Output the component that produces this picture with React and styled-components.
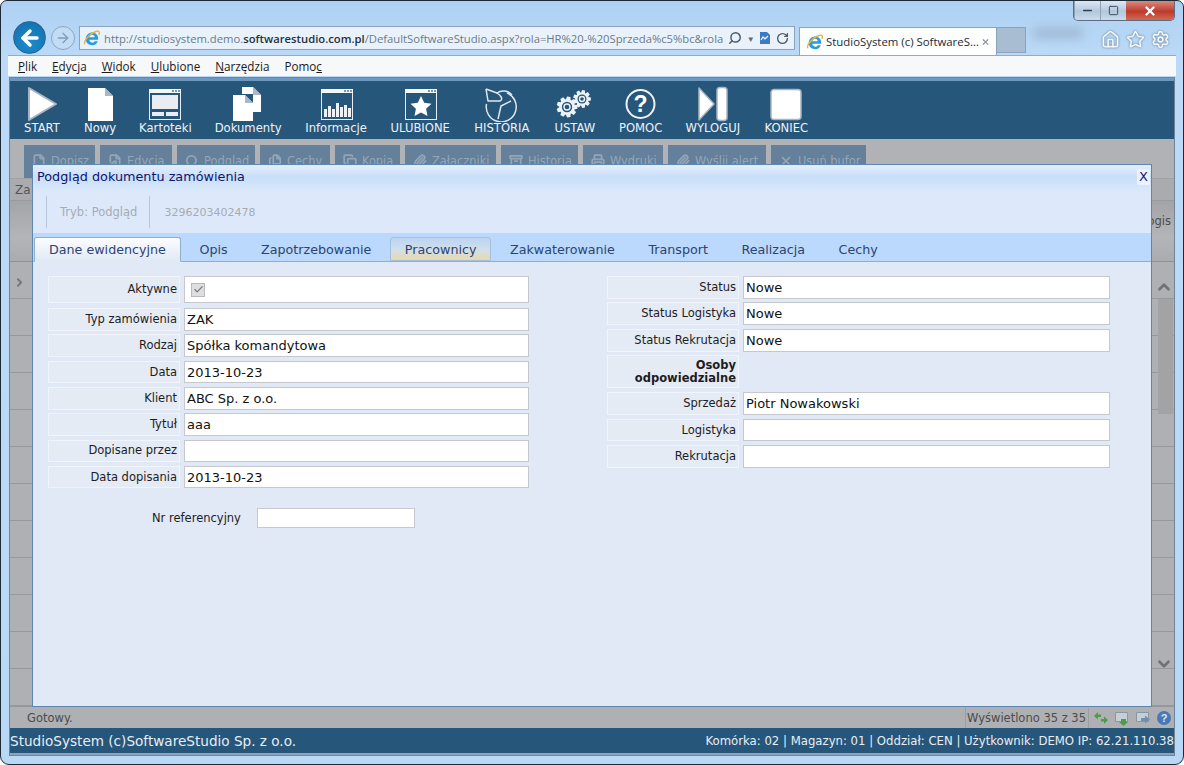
import React from "react";
import styled, { createGlobalStyle } from "styled-components";
import {
  ArrowLeft,
  ArrowRight,
  Check,
  ChevronDown,
  ChevronRight,
  ChevronUp,
  Copy,
  File,
  FilePen,
  Files,
  House,
  Minus,
  Paperclip,
  Printer,
  RotateCw,
  Search,
  Settings,
  Square,
  Star,
  Archive,
  X,
} from "lucide-react";

const GlobalStyle = createGlobalStyle`
  html, body { margin: 0; padding: 0; overflow: hidden; }
  body { font-family: "DejaVu Sans", Verdana, sans-serif; }
  * { box-sizing: border-box; }
`;

const Window = styled.div`
  width: 1184px;
  height: 765px;
  display: flex;
  flex-direction: column;
  border: 1px solid #1c2a36;
  border-radius: 7px 7px 9px 9px;
  overflow: hidden;
  padding: 0 7px 9px 7px;
  background: linear-gradient(#aed1f2 0, #bcdaf8 60px, #b9d8f6 100%);
`;
const TitleRow = styled.div`
  height: 19px;
  display: flex;
  justify-content: flex-end;
`;
const WinButtons = styled.div`
  width: 102px;
  height: 20px;
  margin-right: 1px;
  display: flex;
  border: 1px solid #5d6d7d;
  border-top: 0;
  border-radius: 0 0 5px 5px;
  overflow: hidden;
`;
const WinButton = styled.div`
  flex: ${(p) => (p.$close ? "0 0 48px" : "1")};
  display: flex;
  align-items: center;
  justify-content: center;
  color: ${(p) => (p.$close ? "#fff" : "#33404e")};
  border-left: ${(p) => (p.$close ? "0" : "1px solid #8fa2b5")};
  background: ${(p) =>
    p.$close
      ? "linear-gradient(#d98a7e, #bd3b2c 55%, #cf6a55)"
      : "linear-gradient(#dbe7f3, #b3c8dd 55%, #c9dbec)"};
`;
const NavRow = styled.div`
  height: 35px;
  display: flex;
  align-items: flex-end;
  padding-left: 5px;
`;
const BackButton = styled.div`
  width: 33px;
  height: 33px;
  margin-bottom: 1px;
  border-radius: 50%;
  background: radial-gradient(circle at 50% 70%, #1c8ccc, #0f6ead);
  border: 1px solid #2a5f88;
  color: #fff;
  display: flex;
  align-items: center;
  justify-content: center;
`;
const ForwardButton = styled.div`
  width: 24px;
  height: 24px;
  margin: 0 4px 5px 5px;
  border-radius: 50%;
  border: 1px solid #8aa6c2;
  background: #c3dcf5;
  color: #7e9cba;
  display: flex;
  align-items: center;
  justify-content: center;
`;
const AddressBar = styled.div`
  width: 716px;
  height: 24px;
  margin-bottom: 5px;
  display: flex;
  align-items: center;
  padding: 0 3px;
  border: 1px solid #8ba3bc;
  background: #e9f2fb;
  font-family: "Open Sans", sans-serif;
  font-size: 11.25px;
`;
const Url = styled.div`
  width: 619px;
  margin-left: 3px;
  overflow: hidden;
  white-space: nowrap;
  color: #6b7a8a;
  b { font-weight: 600; color: #26303a; }
`;
const AddressTools = styled.div`
  flex: 1;
  display: flex;
  align-items: center;
  justify-content: space-between;
  padding: 0 2px 0 5px;
  color: #4d5a68;
  i { font-style: normal; font-size: 8px; color: #5f6c79; }
`;
const Tab = styled.div`
  width: 198px;
  height: 28px;
  margin-left: 4px;
  display: flex;
  align-items: center;
  gap: 2px;
  padding: 0 6px;
  background: #fdfefe;
  border: 1px solid #8ba3bc;
  border-bottom: 0;
  font-family: "Open Sans", sans-serif;
  font-size: 11.4px;
  color: #1f2a36;
  white-space: nowrap;
  span { flex: 1; }
`;
const GhostTab = styled.div`
  width: 29px;
  height: 26px;
  margin-bottom: 2px;
  background: #a9bdd2;
  border: 1px solid #8ba3bc;
  border-left: 0;
`;
const BlurHint = styled.div`
  width: 52px;
  height: 12px;
  margin: 0 0 16px 6px;
  border-radius: 6px;
  background: #a2bcd6;
  filter: blur(5px);
`;
const BrowserTools = styled.div`
  margin-left: auto;
  margin-right: 6px;
  margin-bottom: 6px;
  display: flex;
  gap: 6px;
  color: #f4f8fc;
  svg { filter: drop-shadow(0 0 1px #5c7288); }
`;
const MenuBar = styled.div`
  height: 21px;
  flex: none;
  display: flex;
  align-items: center;
  gap: 15px;
  padding-left: 10px;
  background: #f7f8f9;
  border-top: 1px solid #97abbe;
  font-family: "Open Sans", sans-serif;
  font-size: 11.7px;
  color: #1a1a1a;
  u { text-underline-offset: 1px; }
`;
const Page = styled.div`
  position: relative;
  flex: 1;
  display: flex;
  flex-direction: column;
  margin: 2px 2px 0;
  min-height: 0;
  outline: 1px solid #6f8497;
  border-bottom: 2px solid #92a3b3;
`;
const Toolbar = styled.div`
  height: 61px;
  flex: none;
  display: flex;
  gap: 23px;
  padding: 5px 0 0 13px;
  background: #27567b;
  border-top: 3px solid #6d97bc;
`;
const ToolItem = styled.div`
  display: flex;
  flex-direction: column;
  align-items: center;
  color: #eef3f8;
  font-size: 11.6px;
  line-height: 13px;
  white-space: nowrap;
  svg { display: block; }
`;
const Backdrop = styled.div`
  flex: 1;
  min-height: 0;
  display: flex;
  flex-direction: column;
  padding-top: 6px;
  background: #b0b2b5;
`;
const ActionRow = styled.div`
  height: 33px;
  flex: none;
  display: flex;
  gap: 5px;
  padding-left: 14px;
`;
const ActionButton = styled.div`
  width: ${(p) => p.$w}px;
  display: flex;
  align-items: flex-start;
  gap: 5px;
  padding: 9px 0 0 8px;
  background: #64809b;
  color: #93a7ba;
  font-size: 11.4px;
  line-height: 15px;
  white-space: nowrap;
  overflow: hidden;
  svg { flex: none; color: #93a5b7; }
`;
const HeadRow = styled.div`
  height: 22px;
  flex: none;
  padding: 4px 0 0 5px;
  background: #a9abae;
  border-top: 1px solid #9fa1a4;
  font-size: 12px;
  color: #555;
`;
const ColumnRow = styled.div`
  height: 62px;
  flex: none;
  display: flex;
  justify-content: flex-end;
  align-items: flex-end;
  padding: 0 3px 33px 0;
  overflow: hidden;
  background: linear-gradient(#a2a4a7, #b3b5b8 60%, #a9abae);
  border-top: 1px solid #97999c;
  border-bottom: 1px solid #8f9194;
  font-size: 11.5px;
  color: #4c4c4c;
  white-space: nowrap;
`;
const TableBody = styled.div`
  flex: 1;
  min-height: 0;
  display: flex;
  justify-content: space-between;
  background: repeating-linear-gradient(#aeb0b3 0, #aeb0b3 36px, #97999c 36px, #97999c 37px);
`;
const CollapseStrip = styled.div`
  width: 22px;
  padding: 12px 0 0 3px;
  color: #75787b;
`;
const ScrollColumn = styled.div`
  width: 20px;
  display: flex;
  flex-direction: column;
  align-items: center;
  padding: 16px 0 33px;
  color: #6f7275;
`;
const ScrollTrack = styled.div`
  flex: 1;
  width: 100%;
  padding: 3px 0 0 4px;
`;
const ScrollThumb = styled.div`
  width: 15px;
  height: 115px;
  background: #a3a3a5;
`;
const StatusBar = styled.div`
  height: 22px;
  flex: none;
  display: flex;
  align-items: center;
  justify-content: space-between;
  padding-left: 17px;
  background: #aeb0b3;
  border-top: 1px solid #94979a;
  color: #4c4c4c;
  font-size: 11.5px;
`;
const StatusRight = styled.div`
  height: 100%;
  display: flex;
  align-items: center;
  gap: 5px;
  padding: 0 2px 0 1px;
  border-left: 1px solid #9b9ea1;
  span { border-right: 1px solid #9b9ea1; padding-right: 2px; line-height: 20px; margin-right: -1px; }
`;
const Footer = styled.div`
  height: 25px;
  flex: none;
  display: flex;
  align-items: center;
  justify-content: space-between;
  background: #27567b;
  color: #e8eef4;
  font-size: 11.7px;
  white-space: nowrap;
`;
const FooterLeft = styled.span`
  font-size: 13.6px;
`;
const Modal = styled.div`
  position: absolute;
  left: 22px;
  top: 86px;
  width: 1120px;
  height: 543px;
  display: flex;
  flex-direction: column;
  border: 1px solid #5d87ae;
  background: #e1e9f6;
`;
const ModalTitle = styled.div`
  height: 27px;
  flex: none;
  display: flex;
  align-items: center;
  justify-content: space-between;
  padding: 0 0 4px 4px;
  background: linear-gradient(#e3eefd, #c9def9 45%, #dbe9fc);
  color: #0b1570;
  font-size: 12.8px;
`;
const CloseBox = styled.div`
  width: 13px;
  height: 16px;
  margin-right: 1px;
  display: flex;
  align-items: center;
  justify-content: center;
  background: #eaf2fd;
  color: #13247c;
  font-size: 13px;
`;
const ModeRow = styled.div`
  height: 41px;
  flex: none;
  display: flex;
  padding: 4px 0 5px 13px;
  background: #dde9fb;
  color: #a6abb2;
`;
const ModeCell = styled.div`
  display: flex;
  align-items: center;
  padding: 0 ${(p) => p.$pr}px 0 ${(p) => p.$pl}px;
  border-left: 1px solid #b3c6da;
  font-size: ${(p) => p.$fs}px;
`;
const TabStrip = styled.div`
  height: 29px;
  flex: none;
  display: flex;
  align-items: flex-end;
  gap: 3.5px;
  padding-left: 1px;
  background: #bbd9fc;
  border-bottom: 1px solid #8eaed0;
`;
const FormTab = styled.div`
  height: ${(p) => (p.$active ? 25 : 24)}px;
  margin-bottom: ${(p) => (p.$active ? -1 : 0)}px;
  display: flex;
  align-items: center;
  padding: 0 14px;
  border-radius: 3px 3px 0 0;
  font-size: 12.7px;
  white-space: nowrap;
  color: #2d4371;
  border: 1px solid transparent;
  ${(p) =>
    p.$active &&
    "background: linear-gradient(#fbfdff, #e1e9f6); border-color: #8eaed0; border-bottom-color: #e1e9f6;"}
  ${(p) =>
    p.$hover &&
    "background: linear-gradient(#bcd5f2 0, #d2dfe9 55%, #e8d9a9 100%); border-color: #a5c0dc;"}
`;
const FormBody = styled.div`
  flex: 1;
  display: flex;
  padding: 14px 0 0 15px;
`;
const LeftPane = styled.div`
  width: 559px;
`;
const RightPane = styled.div`
  width: 503px;
`;
const Rows = styled.div`
  display: flex;
  flex-direction: column;
  gap: ${(p) => p.$gap}px;
`;
const Row = styled.div`
  display: flex;
  gap: 4px;
  height: ${(p) => p.$h || 22.6}px;
  margin-bottom: ${(p) => p.$mb || 0}px;
`;
const Label = styled.div`
  width: 132px;
  flex: none;
  display: flex;
  align-items: center;
  justify-content: flex-end;
  text-align: right;
  padding-right: 2px;
  border: 1px solid #f1f5fb;
  background: #e5ebf5;
  color: #1d1d1d;
  font-size: 11.5px;
  line-height: 13px;
  font-weight: ${(p) => (p.$bold ? 700 : 400)};
`;
const Field = styled.input`
  width: ${(p) => p.$w}px;
  flex: none;
  height: 100%;
  padding: 0 2px;
  border: 1px solid #c5c8cc;
  background: #fff;
  color: #111;
  font-family: "DejaVu Sans", Verdana, sans-serif;
  font-size: 13px;
  outline: none;
`;
const CheckCell = styled.div`
  width: 345px;
  height: 100%;
  display: flex;
  align-items: center;
  padding-left: 6px;
  border: 1px solid #c5c8cc;
  background: #fff;
`;
const CheckBox = styled.div`
  width: 14px;
  height: 14px;
  display: flex;
  align-items: center;
  justify-content: center;
  border: 1px solid #b9b9b9;
  background: #dedede;
  color: #777;
`;
const RefRow = styled.div`
  display: flex;
  align-items: center;
  gap: 16px;
  height: 20px;
  margin-top: 20px;
  padding-left: 104px;
  font-size: 11.5px;
  color: #1d1d1d;
`;
const RefField = styled(Field)`
  width: 158px;
`;

const Svg = ({ w = 44, h = 36, children }) => (
  <svg width={w} height={h} viewBox={`0 0 ${w} ${h}`}>
    {children}
  </svg>
);

const gearPoints = (cx, cy, r, teeth) => {
  const pts = [];
  const step = (Math.PI * 2) / teeth;
  for (let i = 0; i < teeth; i++) {
    const a = i * step;
    [
      [-0.3, r * 0.74],
      [-0.16, r],
      [0.16, r],
      [0.3, r * 0.74],
    ].forEach(([o, rad]) => {
      pts.push(`${(cx + Math.cos(a + o * step * 1.5) * rad).toFixed(1)},${(cy + Math.sin(a + o * step * 1.5) * rad).toFixed(1)}`);
    });
  }
  return pts.join(" ");
};

const DocShape = ({ x, y, w, h }) => (
  <path
    d={`M${x} ${y}h${w - 8}l8 8v${h - 8}h-${w}z`}
    fill="#fff"
  />
);

const WindowFrame = ({ children }) => (
  <g>
    <rect x="6.5" y="3.5" width="31" height="30" fill="none" stroke="#e6edf4" />
    <rect x="6" y="3" width="32" height="4" fill="#f4f7fa" />
    <rect x="29" y="4" width="2" height="2" fill="#7c95ad" />
    <rect x="32" y="4" width="2" height="2" fill="#7c95ad" />
    <rect x="35" y="4" width="2" height="2" fill="#7c95ad" />
    {children}
  </g>
);

const toolItems = [
  {
    label: "START",
    icon: (
      <Svg w={38}>
        <path d="M6 2 L33 18 L6 34 Z" fill="#fff" stroke="#a7b4c1" strokeWidth="2" strokeLinejoin="round" />
      </Svg>
    ),
  },
  {
    label: "Nowy",
    icon: (
      <Svg w={31}>
        <DocShape x={3} y={2} w={25} h={33} />
        <path d="M20 2l8 8h-8z" fill="#a9b8c6" />
      </Svg>
    ),
  },
  {
    label: "Kartoteki",
    icon: (
      <Svg w={52}>
        <g transform="translate(4 0)">
          <WindowFrame>
            <rect x="9" y="9" width="26" height="14" fill="#e9edf1" />
            <rect x="9" y="26" width="12" height="4" fill="#e9edf1" />
            <rect x="23" y="26" width="12" height="4" fill="#e9edf1" />
          </WindowFrame>
        </g>
      </Svg>
    ),
  },
  {
    label: "Dokumenty",
    icon: (
      <Svg w={66}>
        <DocShape x={27} y={1} w={19} h={25} />
        <path d="M38 1l8 8h-8z" fill="#a9b8c6" />
        <rect x="17" y="8" width="21" height="27" fill="#27567b" />
        <DocShape x={18} y={9} w={20} h={26} />
        <path d="M30 9l8 8h-8z" fill="#a9b8c6" />
      </Svg>
    ),
  },
  {
    label: "Informacje",
    icon: (
      <Svg w={63}>
        <g transform="translate(10 0)">
          <WindowFrame>
            <path
              d="M9 31v-8h3v8zM13 31v-11h3v11zM17 31v-8h3v8zM21 31v-14h3v14zM25 31v-10h3v10zM29 31v-12h3v12zM33 31v-9h3v9z"
              fill="#eef2f6"
            />
          </WindowFrame>
        </g>
      </Svg>
    ),
  },
  {
    label: "ULUBIONE",
    icon: (
      <Svg w={59}>
        <g transform="translate(8 0)">
          <WindowFrame>
            <path d="M22 10l3.200 6.800 7.300 .9-5.400 5 1.400 7.300-6.500-3.600-6.500 3.600 1.400-7.300-5.400-5 7.300-.9z" fill="#fff" />
          </WindowFrame>
        </g>
      </Svg>
    ),
  },
  {
    label: "HISTORIA",
    icon: (
      <Svg w={58}>
        <g fill="none" stroke="#dfe7ee" strokeWidth="1.500" strokeLinejoin="round">
          <path d="M34 7 A15 15 0 1 1 13.500 18" />
          <path d="M13 3 L15 15 L27 15 C31 13 27 9 24 7 C28 4 35 4 39 9" />
          <path d="M13 3 L24 7" />
          <path d="M25 33 L28 20 L38 15" />
        </g>
      </Svg>
    ),
  },
  {
    label: "USTAW",
    icon: (
      <Svg w={42}>
        <polygon points={gearPoints(13, 21, 10.5, 9)} fill="#eef2f6" />
        <circle cx="13" cy="21" r="5.200" fill="#27567b" />
        <circle cx="13" cy="21" r="3" fill="none" stroke="#eef2f6" strokeWidth="1.400" />
        <polygon points={gearPoints(28, 13, 9, 9)} fill="#eef2f6" />
        <circle cx="28" cy="13" r="4.500" fill="#27567b" />
        <circle cx="28" cy="13" r="2.500" fill="none" stroke="#eef2f6" strokeWidth="1.400" />
      </Svg>
    ),
  },
  {
    label: "POMOC",
    icon: (
      <Svg w={43}>
        <circle cx="21.500" cy="18" r="14" fill="none" stroke="#eef2f6" strokeWidth="2" />
        <text x="21.500" y="26" textAnchor="middle" fontSize="23" fontWeight="700" fill="#fff" fontFamily="Liberation Sans, sans-serif">
          ?
        </text>
      </Svg>
    ),
  },
  {
    label: "WYLOGUJ",
    icon: (
      <Svg w={55}>
        <path d="M14 2 L29 18 L14 34 Z" fill="#fff" stroke="#a7b4c1" strokeWidth="1.500" strokeLinejoin="round" />
        <rect x="32" y="1.500" width="10" height="33" rx="3" fill="#fff" stroke="#a7b4c1" strokeWidth="1.500" />
      </Svg>
    ),
  },
  {
    label: "KONIEC",
    icon: (
      <Svg w={46}>
        <rect x="8" y="3.500" width="30" height="30" rx="3" fill="#fff" stroke="#a7b4c1" strokeWidth="1.500" />
      </Svg>
    ),
  },
];

const actions = [
  ["Dopisz", 71, File],
  ["Edycja", 72, FilePen],
  ["Podgląd", 78, Search],
  ["Cechy", 70, Files],
  ["Kopia", 65, Copy],
  ["Załączniki", 91, Paperclip],
  ["Historia", 77, Archive],
  ["Wydruki", 80, Printer],
  ["Wyślij alert", 98, Paperclip],
  ["Usuń bufor", 95, X],
];

const tabs = [
  { label: "Dane ewidencyjne", active: true },
  { label: "Opis" },
  { label: "Zapotrzebowanie" },
  { label: "Pracownicy", hover: true },
  { label: "Zakwaterowanie" },
  { label: "Transport" },
  { label: "Realizacja" },
  { label: "Cechy" },
];

const leftRows = [
  ["Typ zamówienia", "ZAK"],
  ["Rodzaj", "Spółka komandytowa"],
  ["Data", "2013-10-23"],
  ["Klient", "ABC Sp. z o.o."],
  ["Tytuł", "aaa"],
  ["Dopisane przez", ""],
  ["Data dopisania", "2013-10-23"],
];

const rightTop = [
  ["Status", "Nowe"],
  ["Status Logistyka", "Nowe"],
  ["Status Rekrutacja", "Nowe"],
];

const rightBottom = [
  ["Sprzedaż", "Piotr Nowakowski"],
  ["Logistyka", ""],
  ["Rekrutacja", ""],
];

const IeLogo = ({ size = 18 }) => (
  <svg width={size} height={size} viewBox="0 0 20 20" style={{ flex: "none" }}>
    <path
      fillRule="evenodd"
      fill="#2b9ade"
      d="M3 11a7 7 0 0 1 13.800-1.800V12H7a3.200 3.200 0 0 0 6 1.500h3.500A7 7 0 0 1 3 11zM7 9.300h6a3 3 0 0 0-6 0z"
    />
    <path d="M2 17C0 13 9 4 15 2.500c3-.7 4 1 2.500 4" fill="none" stroke="#e3b53b" strokeWidth="1.500" />
  </svg>
);

const StatusIcons = () => (
  <>
    <svg width="16" height="16" viewBox="0 0 16 16">
      <path d="M1 6l4-4v2.500h3V7H5v2.500zM15 10l-4 4v-2.500H8V9h3V6.500z" fill="#4f9a4c" />
    </svg>
    <svg width="16" height="16" viewBox="0 0 16 16">
      <path d="M1.500 2.500h12v9h-12z" fill="#c6ced6" stroke="#8a97a3" />
      <path d="M7 9h5v3h2l-4.500 4L5 12h2z" fill="#4f9a4c" />
    </svg>
    <svg width="16" height="16" viewBox="0 0 16 16">
      <path d="M1.500 2.500h12v9h-12z" fill="#c6ced6" stroke="#8a97a3" />
      <path d="M6 8h4V5.500l5 4-5 4V11H6z" fill="#6d8fb3" />
    </svg>
    <svg width="16" height="16" viewBox="0 0 16 16">
      <circle cx="8" cy="8" r="7" fill="#4a78b8" />
      <text x="8" y="12" textAnchor="middle" fontSize="11" fontWeight="700" fill="#dbe7f5" fontFamily="Liberation Sans, sans-serif">
        ?
      </text>
    </svg>
  </>
);

export default function App() {
  return (
    <Window>
      <GlobalStyle />
      <TitleRow>
        <WinButtons>
          <WinButton><Minus size={13} strokeWidth={3} /></WinButton>
          <WinButton><Square size={11} strokeWidth={2} /></WinButton>
          <WinButton $close><X size={14} strokeWidth={4} /></WinButton>
        </WinButtons>
      </TitleRow>
      <NavRow>
        <BackButton><ArrowLeft size={24} strokeWidth={3.5} /></BackButton>
        <ForwardButton><ArrowRight size={16} /></ForwardButton>
        <AddressBar>
          <IeLogo />
          <Url>
            http://studiosystem.demo.<b>softwarestudio.com.pl</b>/DefaultSoftwareStudio.aspx?rola=HR%20-%20Sprzeda%c5%bc&amp;rola
          </Url>
          <AddressTools>
            <Search size={14} strokeWidth={2.5} style={{ transform: "scaleX(-1)" }} />
            <i>▼</i>
            <svg width="12" height="14" viewBox="0 0 12 14">
              <path d="M1 1h7l3 3v9H1z" fill="#3a7bc8" />
              <path d="M2 9l2-3 2 2 3-3" fill="none" stroke="#fff" strokeWidth="1.200" />
            </svg>
            <RotateCw size={13} strokeWidth={2.5} />
          </AddressTools>
        </AddressBar>
        <Tab>
          <IeLogo />
          <span>StudioSystem (c) SoftwareS...</span>
          <X size={12} color="#8d9aa6" strokeWidth={3} />
        </Tab>
        <GhostTab />
        <BlurHint />
        <BrowserTools>
          <House size={19} />
          <Star size={19} />
          <Settings size={19} />
        </BrowserTools>
      </NavRow>
      <MenuBar>
        <span><u>P</u>lik</span>
        <span><u>E</u>dycja</span>
        <span><u>W</u>idok</span>
        <span><u>U</u>lubione</span>
        <span><u>N</u>arzędzia</span>
        <span>Pomo<u>c</u></span>
      </MenuBar>
      <Page>
        <Toolbar>
          {toolItems.map((t) => (
            <ToolItem key={t.label}>
              {t.icon}
              {t.label}
            </ToolItem>
          ))}
        </Toolbar>
        <Backdrop>
          <ActionRow>
            {actions.map(([label, w, Icon]) => (
              <ActionButton key={label} $w={w}>
                <Icon size={14} strokeWidth={3} />
                {label}
              </ActionButton>
            ))}
          </ActionRow>
          <HeadRow>Za</HeadRow>
          <ColumnRow>Logis</ColumnRow>
          <TableBody>
            <CollapseStrip><ChevronRight size={13} strokeWidth={3.5} /></CollapseStrip>
            <ScrollColumn>
              <ChevronUp size={18} strokeWidth={3.5} />
              <ScrollTrack><ScrollThumb /></ScrollTrack>
              <ChevronDown size={18} strokeWidth={3.5} />
            </ScrollColumn>
          </TableBody>
        </Backdrop>
        <StatusBar>
          Gotowy.
          <StatusRight>
            <span>Wyświetlono 35 z 35</span>
            <StatusIcons />
          </StatusRight>
        </StatusBar>
        <Footer>
          <FooterLeft>StudioSystem (c)SoftwareStudio Sp. z o.o.</FooterLeft>
          <span>Komórka: 02 | Magazyn: 01 | Oddział: CEN | Użytkownik: DEMO IP: 62.21.110.38</span>
        </Footer>
        <Modal>
          <ModalTitle>
            Podgląd dokumentu zamówienia
            <CloseBox>X</CloseBox>
          </ModalTitle>
          <ModeRow>
            <ModeCell $pl={13} $pr={12} $fs={11.5}>Tryb: Podgląd</ModeCell>
            <ModeCell $pl={14} $pr={0} $fs={11}>3296203402478</ModeCell>
          </ModeRow>
          <TabStrip>
            {tabs.map((t) => (
              <FormTab key={t.label} $active={t.active} $hover={t.hover}>
                {t.label}
              </FormTab>
            ))}
          </TabStrip>
          <FormBody>
            <LeftPane>
              <Rows $gap={3.7}>
                <Row $h={27} $mb={1.5}>
                  <Label>Aktywne</Label>
                  <CheckCell>
                    <CheckBox><Check size={11} strokeWidth={2.5} /></CheckBox>
                  </CheckCell>
                </Row>
                {leftRows.map(([label, value]) => (
                  <Row key={label}>
                    <Label>{label}</Label>
                    <Field $w={345} readOnly value={value} />
                  </Row>
                ))}
              </Rows>
              <RefRow>
                Nr referencyjny
                <RefField readOnly value="" />
              </RefRow>
            </LeftPane>
            <RightPane>
              <Rows $gap={3.9}>
                {rightTop.map(([label, value]) => (
                  <Row key={label}>
                    <Label>{label}</Label>
                    <Field $w={367} readOnly value={value} />
                  </Row>
                ))}
                <Row $h={33}>
                  <Label $bold>Osoby odpowiedzialne</Label>
                </Row>
                {rightBottom.map(([label, value]) => (
                  <Row key={label}>
                    <Label>{label}</Label>
                    <Field $w={367} readOnly value={value} />
                  </Row>
                ))}
              </Rows>
            </RightPane>
          </FormBody>
        </Modal>
      </Page>
    </Window>
  );
}
